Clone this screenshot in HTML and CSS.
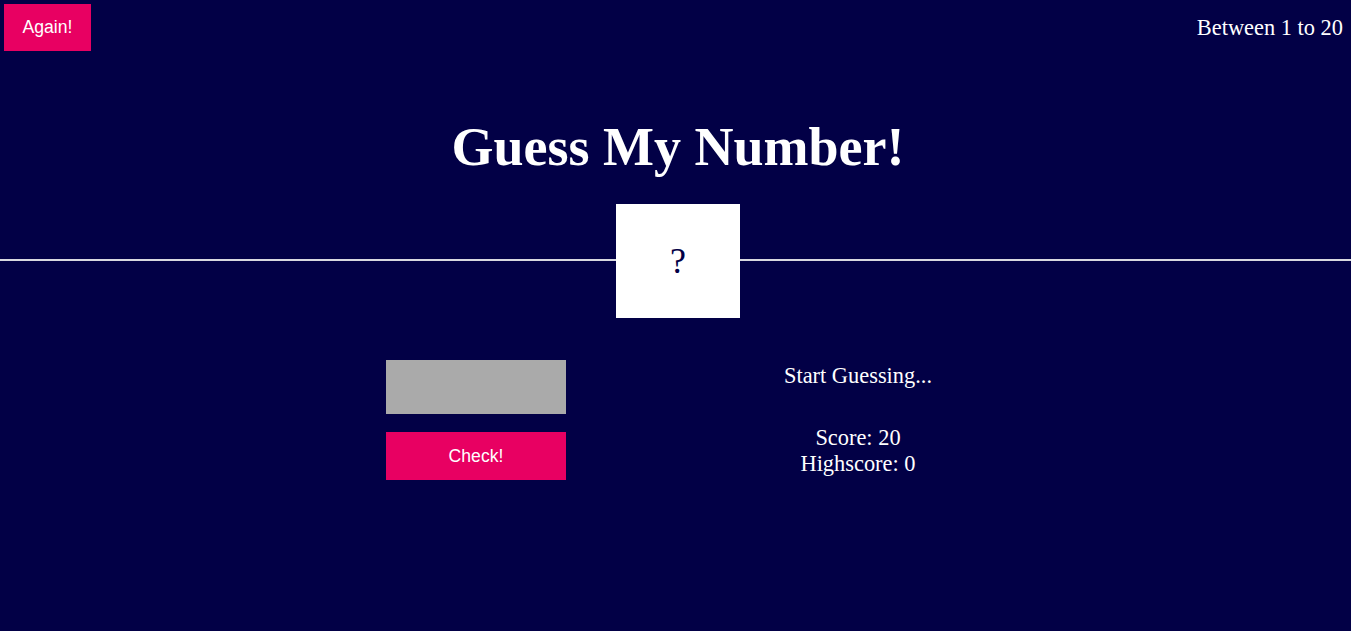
FILE: index.html
```html
<!DOCTYPE html>
<html lang="en">
<head>
<meta charset="utf-8">
<title>Guess My Number!</title>
<link rel="stylesheet" href="styles.css">
</head>
<body>
<header class="header">
  <div class="top">
    <button class="btn again">Again!</button>
    <p class="between">Between 1 to 20</p>
  </div>
  <h1 class="title">Guess My Number!</h1>
  <div class="number">?</div>
</header>
<main class="play">
  <section class="left">
    <input type="number" class="guess">
    <button class="btn check">Check!</button>
  </section>
  <section class="right">
    <p class="message">Start Guessing...</p>
    <p class="label-score">Score: <span class="score">20</span></p>
    <p class="label-highscore">Highscore: <span class="highscore">0</span></p>
  </section>
</main>
</body>
</html>
```
FILE: styles.css
```css
* { box-sizing: border-box; }

html, body {
  margin: 0;
  padding: 0;
}

body {
  background: #020046;
  color: #ffffff;
  font-family: "Liberation Serif", "Times New Roman", serif;
  min-height: 631px;
}

.header {
  position: relative;
  border-bottom: 2px solid #d8d8e0;
  height: 261px;
}

.top {
  display: flex;
  justify-content: space-between;
  align-items: flex-start;
  padding: 4px 8px 0 4px;
}

.btn {
  border: none;
  background: #e80062;
  color: #ffffff;
  font-family: "Liberation Sans", Arial, sans-serif;
  font-size: 17.6px;
  line-height: 21px;
  cursor: pointer;
}

.again {
  width: 87px;
  height: 47px;
  padding: 0;
}

.between {
  margin: 10.5px 0 0;
  font-size: 22.4px;
}

.title {
  margin: 65px 0 0;
  padding-left: 5px;
  text-align: center;
  font-size: 54px;
  font-weight: bold;
}

.number {
  position: absolute;
  left: calc(50% + 2.5px);
  bottom: -59px;
  transform: translateX(-50%);
  width: 124px;
  height: 114px;
  background: #ffffff;
  color: #020046;
  font-size: 36px;
  display: flex;
  align-items: center;
  justify-content: center;
}

.play {
  display: flex;
  justify-content: center;
  gap: 92px;
  padding-left: 93px;
  margin-top: 99px;
}

.left {
  display: flex;
  flex-direction: column;
  width: 180px;
  gap: 18px;
}

.guess {
  width: 180px;
  height: 54px;
  border: none;
  background: #aaaaaa;
  outline: none;
}

.check {
  width: 180px;
  height: 48px;
  padding: 0;
}

.right {
  width: 400px;
  display: flex;
  flex-direction: column;
  align-items: center;
  font-size: 22.4px;
  padding-top: 2.5px;
}

.right p {
  margin: 0;
}

.message {
  margin-bottom: 36px !important;
}
```
